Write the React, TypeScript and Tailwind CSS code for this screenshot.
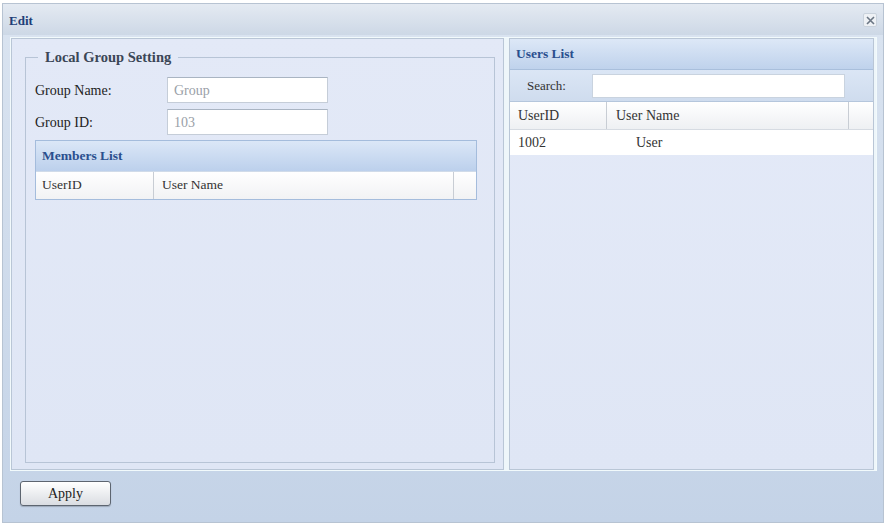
import React from "react";

const serif = { fontFamily: '"Liberation Serif", "Times New Roman", serif' };

export default function App() {
  return (
    <div className="w-[887px] h-[526px] bg-white relative overflow-hidden" style={serif}>
      <div className="absolute left-[2px] top-[3px] w-[882px] h-[520px] border border-[#b7c3d2] bg-[#c7d5e8] flex flex-col">
        {/* Title bar */}
        <div className="h-[31px] flex items-center justify-between pl-[6px] pr-[5px] bg-gradient-to-b from-[#e4eaf2] to-[#cdd8e6]">
          <span className="text-[13px] font-bold text-[#1f3f78] mt-[2px]">Edit</span>
          <div className="w-[14px] h-[14px] mr-[1px] mt-[1px] flex items-center justify-center border border-[#c9d2dc] bg-[#eef1f5] rounded-[2px]">
            <svg width="9" height="9" viewBox="0 0 9 9">
              <path d="M1 1 L8 8 M8 1 L1 8" stroke="#6b7684" strokeWidth="1.6" />
            </svg>
          </div>
        </div>
        {/* Body */}
        <div className="flex-1 flex flex-col bg-gradient-to-b from-[#d9e3f0] to-[#c4d3e7]">
          <div className="ml-[7px] mr-[6px] mt-[2px] h-[434px] border border-[#f2fafc] flex gap-[5px] bg-[#eef6fa]">
            {/* Left panel */}
            <div className="w-[493px] h-full border border-[#b9c6d6] bg-gradient-to-b from-[#e3e9f7] to-[#dfe6f5] pt-[18px] pl-[13px] pr-[8px] pb-[6px]">
              <div className="relative h-full border border-[#b7c4d6] pt-[19px] px-[9px]">
                <span className="absolute left-[12px] top-[-10px] px-[7px] bg-[#e3e9f7] text-[14.5px] font-bold text-[#3b4656] leading-[18px]">
                  Local Group Setting
                </span>
                <div className="flex items-center h-[26px]">
                  <span className="w-[132px] text-[14px] text-[#222]">Group Name:</span>
                  <div className="w-[161px] h-[26px] bg-white border border-[#c5cdd8] border-t-[#a9b4c2] flex items-center px-[6px] text-[14px] text-[#9aa0a8]">Group</div>
                </div>
                <div className="flex items-center h-[26px] mt-[6px]">
                  <span className="w-[132px] text-[14px] text-[#222]">Group ID:</span>
                  <div className="w-[161px] h-[26px] bg-white border border-[#c5cdd8] border-t-[#a9b4c2] flex items-center px-[6px] text-[14px] text-[#9aa0a8]">103</div>
                </div>
                <div className="mt-[5px] w-[442px] border border-[#a4bcdc]">
                  <div className="h-[30px] flex items-center px-[6px] bg-gradient-to-b from-[#dbe7f7] to-[#bcd0ec] text-[13.5px] font-bold text-[#2a4f8e]">
                    Members List
                  </div>
                  <div className="h-[28px] flex bg-gradient-to-b from-[#ffffff] to-[#f1f2f4] text-[13.5px] text-[#333] border-t border-[#d0dbe9]">
                    <div className="w-[118px] flex items-center px-[6px] border-r border-[#c8cdd4]">UserID</div>
                    <div className="flex-1 flex items-center px-[8px] border-r border-[#c8cdd4]">User Name</div>
                    <div className="w-[22px]" />
                  </div>
                </div>
              </div>
            </div>
            {/* Right panel */}
            <div className="flex-1 h-full border border-[#b9c6d6] mr-[2px] bg-gradient-to-b from-[#e4eaf8] to-[#dfe6f5] flex flex-col">
              <div className="h-[31px] flex items-center px-[6px] bg-gradient-to-b from-[#dde8f7] to-[#bfd2ec] border-b border-[#a9bfdc] text-[13.5px] font-bold text-[#2a4f8e]">
                Users List
              </div>
              <div className="h-[32px] flex items-center bg-gradient-to-b from-[#dbe6f5] to-[#cfdcee] border-b border-[#b5c6dc]">
                <span className="w-[82px] pl-[17px] text-[13px] text-[#333]">Search:</span>
                <div className="w-[253px] h-[24px] bg-white border border-[#c9d3df]" />
              </div>
              <div className="h-[28px] flex bg-gradient-to-b from-[#ffffff] to-[#eef0f3] text-[14px] text-[#333] border-b border-[#d6dbe2]">
                <div className="w-[97px] flex items-center px-[8px] border-r border-[#c8cdd4]">UserID</div>
                <div className="w-[242px] flex items-center px-[9px] border-r border-[#c8cdd4]">User Name</div>
                <div className="flex-1" />
              </div>
              <div className="h-[25px] flex bg-white text-[14px] text-[#333]">
                <div className="w-[97px] flex items-center px-[8px]">1002</div>
                <div className="flex items-center pl-[29px]">User</div>
              </div>
            </div>
          </div>
          {/* Footer */}
          <div className="flex-1 flex items-start pt-[10px] pl-[17px]">
            <button className="w-[91px] h-[25px] rounded-[3px] border border-[#5d6570] bg-gradient-to-b from-[#ffffff] to-[#dadde2] text-[14px] text-[#222] shadow-[0_1px_1px_rgba(0,0,0,0.2)]">
              Apply
            </button>
          </div>
        </div>
      </div>
    </div>
  );
}
